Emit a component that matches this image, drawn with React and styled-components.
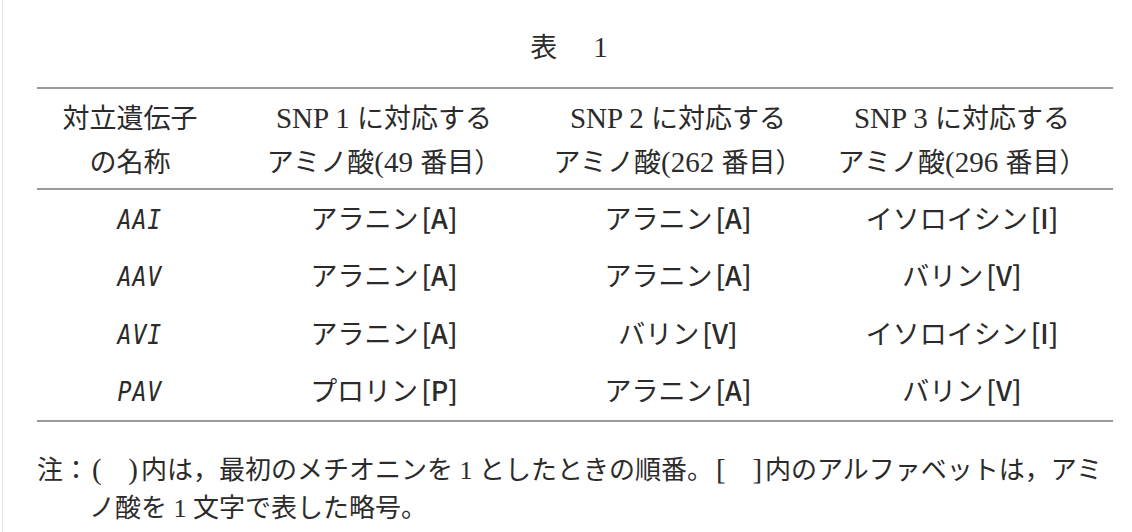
import React from "react";
import styled, { createGlobalStyle } from "styled-components";

const Global = createGlobalStyle`
  html, body {
    margin: 0;
    padding: 0;
    background: #ffffff;
  }
  body {
    font-family: "Noto Sans CJK JP", sans-serif;
    color: #2b2b2b;
    text-spacing-trim: space-all;
  }
`;

const Page = styled.div`
  margin-left: 2px;
  border-left: 1px solid #e2e2e2;
  min-height: 532px;
  padding: 24px 19px 0 34px;
  box-sizing: border-box;
`;

const Title = styled.div`
  display: flex;
  justify-content: center;
  align-items: baseline;
  gap: 36px;
  margin-right: 12px;
  font-size: 27px;
  line-height: 44px;
  margin-bottom: 19px;
`;

const Table = styled.div`
  width: 1076px;
  border-top: 2px solid #9a9a9a;
  border-bottom: 2px solid #9a9a9a;
`;

const Row = styled.div`
  display: grid;
  grid-template-columns: 186px 322px 266px 302px;
  align-items: center;
  box-sizing: border-box;
  height: ${(p) => (p.$head ? "auto" : "57.5px")};
  padding: ${(p) => (p.$head ? "6px 0 5px" : "0 0 2px")};
  border-bottom: ${(p) => (p.$head ? "2px solid #9a9a9a" : "none")};
  font-size: 27px;
  line-height: 44px;
`;

const Cell = styled.div`
  text-align: center;
  white-space: nowrap;
`;

const Lat = styled.span`
  font-family: "Liberation Serif", serif;
  font-size: ${(p) => p.$size || "29px"};
  line-height: 1;
`;

const Pair = styled.span`
  display: inline-flex;
  justify-content: space-between;
  width: 52px;
  padding: 0 3px;
  box-sizing: border-box;
  font-family: "Liberation Serif", serif;
  font-size: 29px;
  line-height: 1;
  text-indent: 0;
  & > span {
    text-indent: 0;
  }
`;

const Allele = styled.span`
  display: inline-block;
  font-family: "DejaVu Sans Mono", monospace;
  font-style: italic;
  font-size: 27px;
  line-height: 1;
  transform: scaleX(0.86);
  margin-left: 20px;
  letter-spacing: 1px;
`;

const Code = styled.span`
  font-weight: 500;
  margin-left: 3px;
`;

const Note = styled.div`
  padding-top: 27px;
  padding-left: 52px;
  text-indent: -52px;
  font-size: 26px;
  line-height: 38px;
  width: 1076px;
  white-space: nowrap;
`;

const header = [
  [["対立遺伝子"], ["の名称"]],
  [[<Lat key="a">SNP 1 </Lat>, "に対応する"], ["アミノ酸", <Lat key="b">(49 </Lat>, "番目）"]],
  [[<Lat key="a">SNP 2 </Lat>, "に対応する"], ["アミノ酸", <Lat key="b">(262 </Lat>, "番目）"]],
  [[<Lat key="a">SNP 3 </Lat>, "に対応する"], ["アミノ酸", <Lat key="b">(296 </Lat>, "番目）"]],
];

const rows = [
  ["AAI", ["アラニン", "A"], ["アラニン", "A"], ["イソロイシン", "I"]],
  ["AAV", ["アラニン", "A"], ["アラニン", "A"], ["バリン", "V"]],
  ["AVI", ["アラニン", "A"], ["バリン", "V"], ["イソロイシン", "I"]],
  ["PAV", ["プロリン", "P"], ["アラニン", "A"], ["バリン", "V"]],
];

export default function App() {
  return (
    <>
      <Global />
      <Page>
        <Title>
          <span>表</span>
          <Lat>1</Lat>
        </Title>
        <Table>
          <Row $head>
            {header.map((h, i) => (
              <Cell key={i}>
                {h[0]}
                <br />
                {h[1]}
              </Cell>
            ))}
          </Row>
          {rows.map((r) => (
            <Row key={r[0]}>
              <Cell>
                <Allele>{r[0]}</Allele>
              </Cell>
              {r.slice(1).map(([name, c], i) => (
                <Cell key={i}>
                  {name}
                  <Code>[{c}]</Code>
                </Cell>
              ))}
            </Row>
          ))}
        </Table>
        <Note>
          注：<Pair><span>(</span><span>)</span></Pair>内は，最初のメチオニンを
          <Lat $size="26px"> 1 </Lat>
          としたときの順番。<Pair><span>[</span><span>]</span></Pair>内のアルファベットは，アミ
          <br />
          ノ酸を<Lat $size="26px"> 1 </Lat>文字で表した略号。
        </Note>
      </Page>
    </>
  );
}
